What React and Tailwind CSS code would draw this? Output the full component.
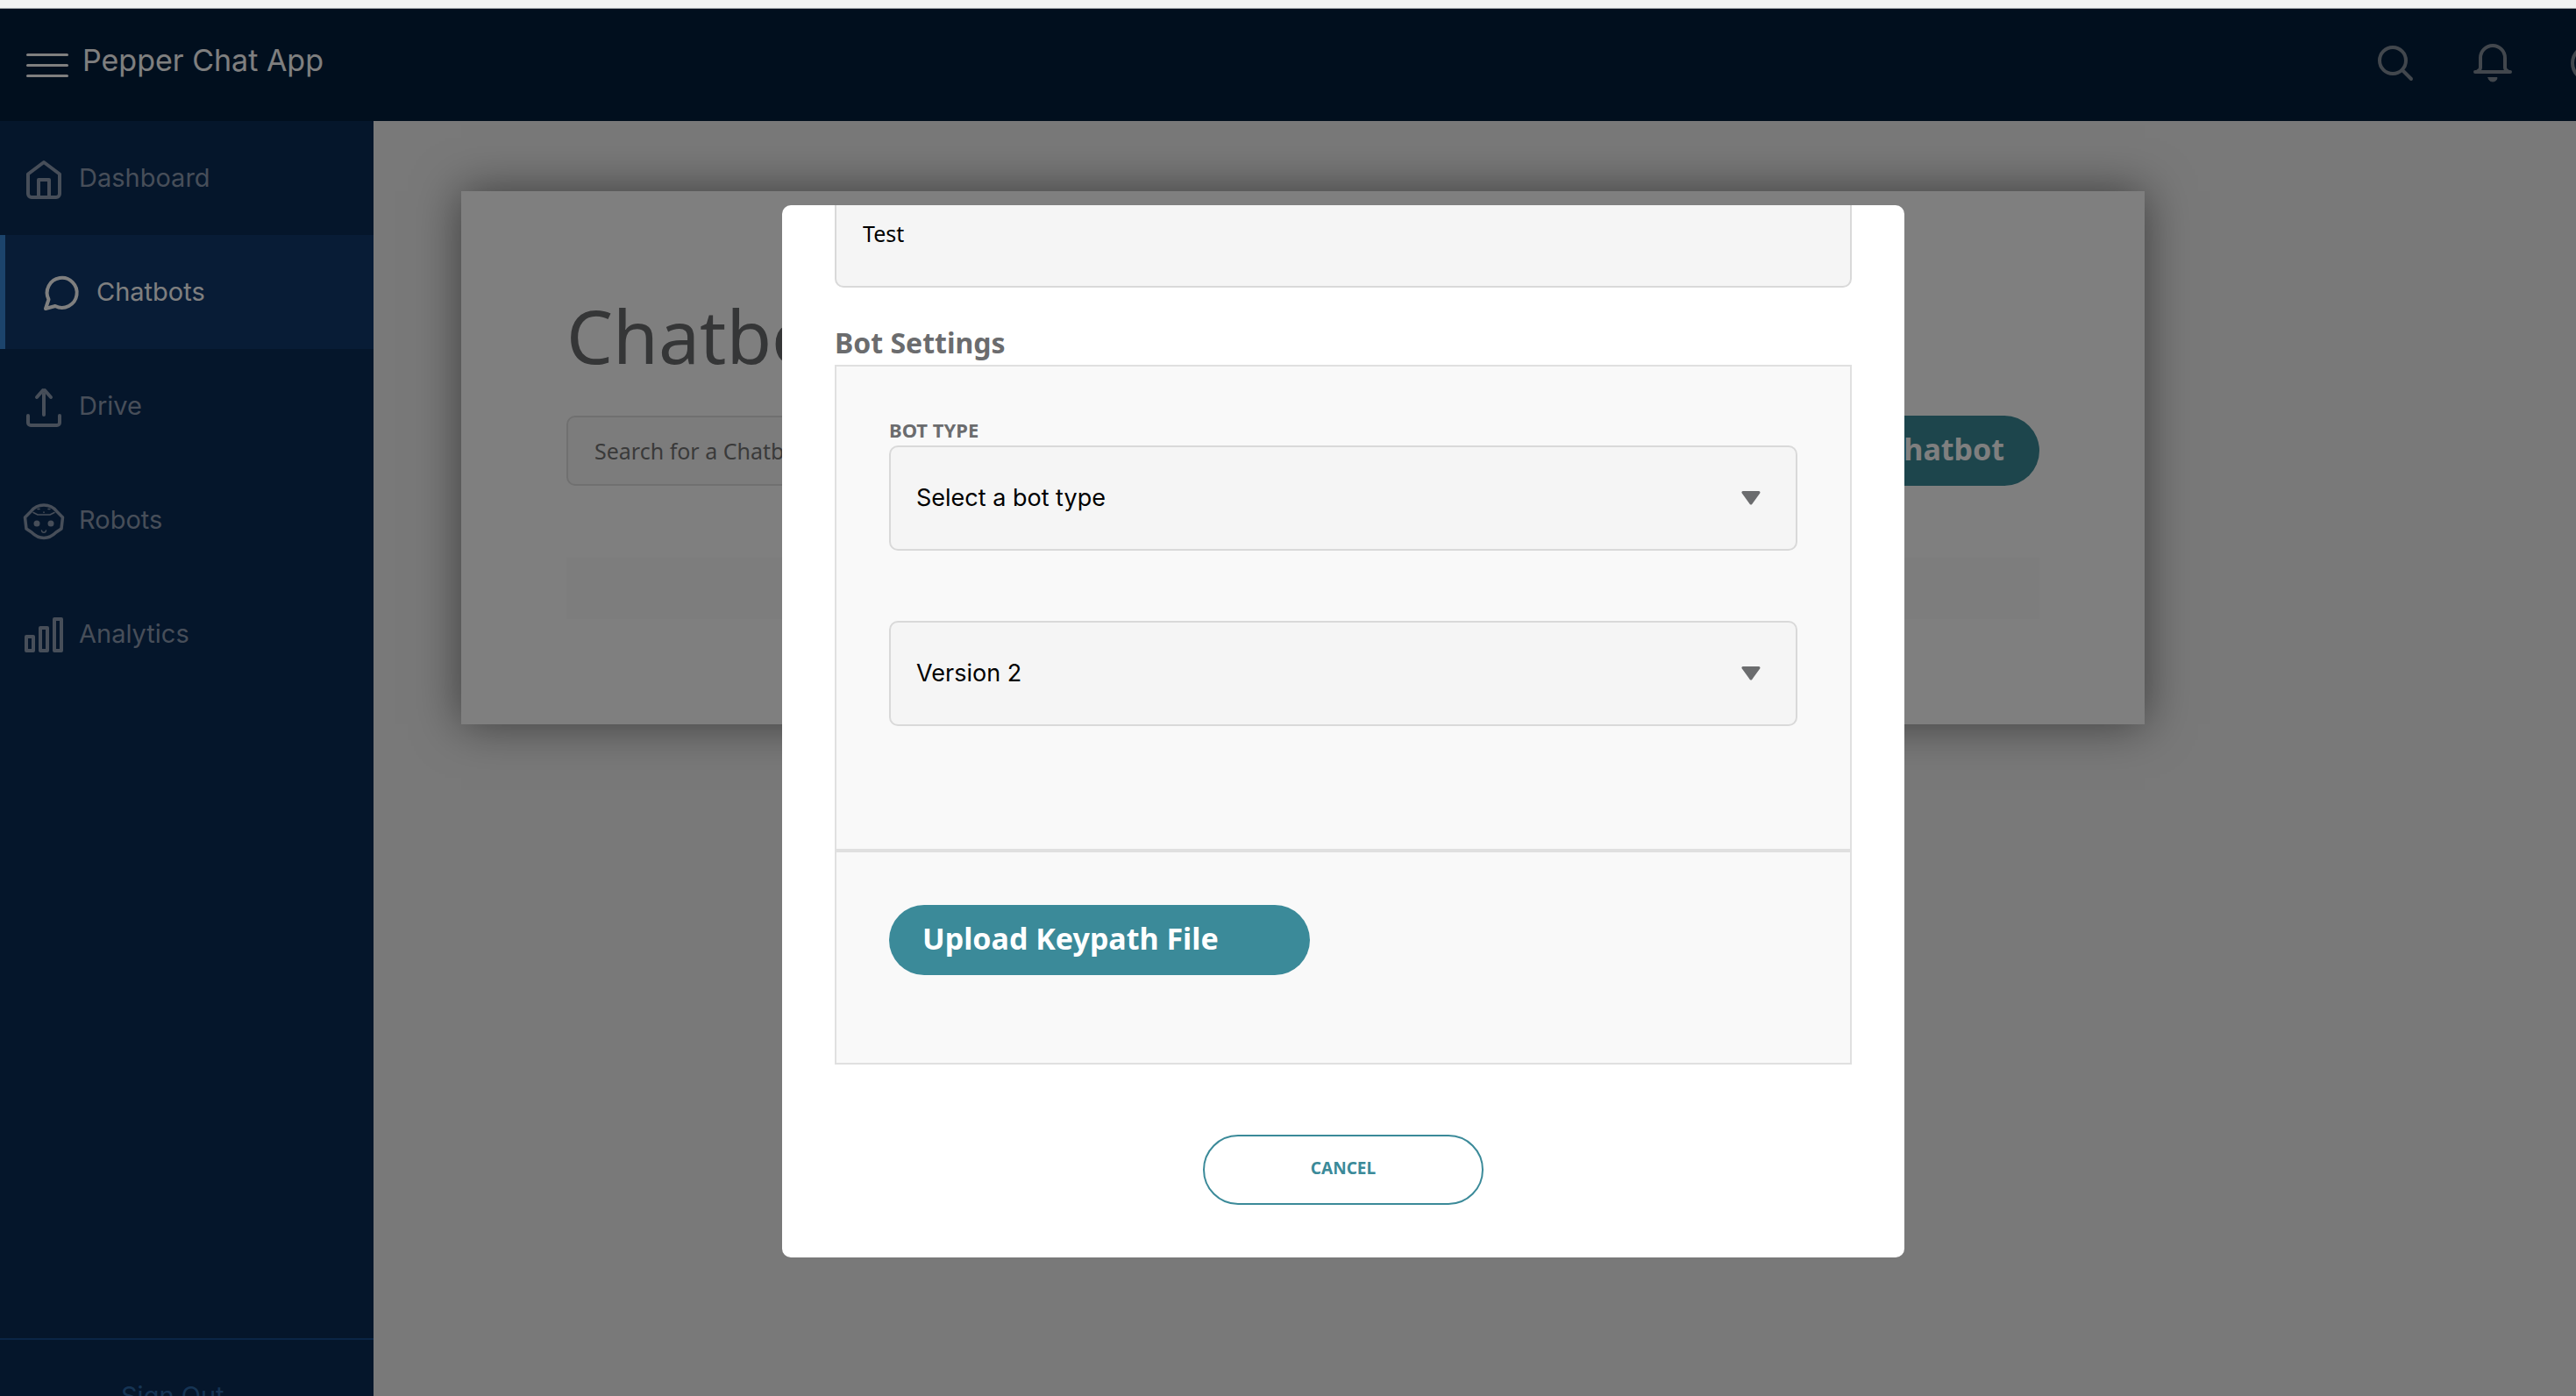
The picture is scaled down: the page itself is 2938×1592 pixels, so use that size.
const stroke = { fill: "none", stroke: "currentColor", strokeWidth: 4, strokeLinecap: "round", strokeLinejoin: "round", "aria-hidden": true };

function HomeIcon() {
  return (
    <svg className="h-12 w-12 shrink-0" viewBox="0 0 48 48" {...stroke}>
      <path d="M6 18.500 24 5l18 13.500V41a4 4 0 0 1-4 4H10a4 4 0 0 1-4-4z" />
      <path d="M18 45V25h12v20" />
    </svg>
  );
}

function ChatIcon() {
  return (
    <svg className="h-12 w-12 shrink-0" viewBox="0 0 48 48" {...stroke}>
      <path d="M6 42l3.500-10.500A17 17 0 1 1 17 39z" />
    </svg>
  );
}

function DriveIcon() {
  return (
    <svg className="h-12 w-12 shrink-0" viewBox="0 0 48 48" {...stroke}>
      <path d="M6 34v8a3 3 0 0 0 3 3h30a3 3 0 0 0 3-3v-8" />
      <path d="M24 9v24" />
      <path d="M16 13l7-8M32 13l-7-8" />
    </svg>
  );
}

function RobotIcon() {
  return (
    <svg className="h-12 w-12 shrink-0" viewBox="0 0 48 48" {...stroke}>
      <path d="M24 6c6.500 0 11 2.500 14.500 7L45.500 20 44 33l-6 4c-4 4-8.500 6.500-14 6.500S14 41 10 37l-6-4L2.500 20l7-7C13 8.500 17.500 6 24 6z" strokeWidth="3.500" />
      <path d="M12 14.500l5 2.500h14l5-2.500" strokeWidth="1.500" />
      <path d="M17 10.500h2M29 10.500h2M24 14v.5" strokeWidth="1.500" />
      <circle cx="16" cy="27" r="3.500" fill="currentColor" stroke="none" />
      <circle cx="32" cy="27" r="3.500" fill="currentColor" stroke="none" />
      <path d="M21.500 35c.5 3 4.500 3 5 0" strokeWidth="1.500" />
    </svg>
  );
}

function AnalyticsIcon() {
  return (
    <svg className="h-12 w-12 shrink-0" viewBox="0 0 48 48" {...stroke}>
      <rect x="4" y="26" width="8" height="16" />
      <rect x="20" y="16" width="8" height="26" />
      <rect x="36" y="6" width="8" height="36" />
    </svg>
  );
}

function SearchIcon() {
  return (
    <svg className="h-11 w-11" viewBox="0 0 44 44" {...stroke}>
      <circle cx="19" cy="19" r="15" />
      <path d="M30 30l10 10" />
    </svg>
  );
}

function BellIcon() {
  return (
    <svg className="h-11 w-11" viewBox="0 0 44 44" {...stroke}>
      <path d="M2 32h40M5 31c2-1 3-2 3-4V16a14 14 0 0 1 28 0v11c0 2 1 3 3 4" />
      <path d="M17 38.500h10c0 6-10 6-10 0z" fill="currentColor" strokeWidth="1" />
    </svg>
  );
}

function ProfileIcon() {
  return (
    <svg className="h-11 w-11" viewBox="0 0 44 44" {...stroke}>
      <circle cx="22" cy="22" r="20" />
      <circle cx="22" cy="17" r="7" />
      <path d="M9 36c4-9 22-9 26 0" />
    </svg>
  );
}

const links = [
  { label: "Dashboard", Icon: HomeIcon },
  { label: "Chatbots", Icon: ChatIcon, active: true },
  { label: "Drive", Icon: DriveIcon },
  { label: "Robots", Icon: RobotIcon },
  { label: "Analytics", Icon: AnalyticsIcon },
];

function Header() {
  return (
    <header className="flex h-32 shrink-0 items-center overflow-hidden bg-[#021e3c] pl-[30px] font-['Inter',sans-serif]">
      <button type="button" aria-label="Toggle menu" className="flex w-12 flex-col gap-[9px]">
        <span className="h-[3px] rounded-full bg-white" />
        <span className="h-[3px] rounded-full bg-white" />
        <span className="h-[3px] rounded-full bg-white" />
      </button>
      <span className="pb-2.5 pl-4 text-[34px] leading-10 text-white">Pepper Chat App</span>
      <div className="-mr-[38px] ml-auto flex items-center gap-[67px] pb-1 text-[#848e9a]">
        <button type="button" aria-label="Search"><SearchIcon /></button>
        <button type="button" aria-label="Notifications"><BellIcon /></button>
        <button type="button" aria-label="Profile"><ProfileIcon /></button>
      </div>
    </header>
  );
}

function Sidebar() {
  return (
    <aside className="flex w-[426px] shrink-0 flex-col bg-[#0a2c56] font-['Inter',sans-serif] text-[29px] leading-10">
      <nav className="flex flex-col">
        {links.map(({ label, Icon, active }) => (
          <a
            key={label}
            href="#"
            className={
              active
                ? "flex h-[130px] items-center gap-4 border-l-6 border-[#3888d8] bg-[#10386c] pt-0.5 pl-10 text-white"
                : "flex h-[130px] items-center gap-4 pt-0.5 pl-[26px] text-[#8e9cb2]"
            }
          >
            <Icon />
            <span className="pb-0.5">{label}</span>
          </a>
        ))}
      </nav>
      <div className="mt-auto h-[66px] overflow-hidden border-t-2 border-[#144a8c] pt-11 pl-[138px]">
        <a href="#" className="text-[#2c68a8]">Sign Out</a>
      </div>
    </aside>
  );
}

function ChatbotsCard() {
  return (
    <section className="w-[1920px] bg-white p-[120px] shadow-[0_0_50px_rgba(0,0,0,0.5)]">
      <h1 className="h-[136px] text-[84px] leading-[90px] text-[#6b6c6e]">Chatbots</h1>
      <div className="flex justify-between">
        <input
          type="text"
          aria-label="Search for a Chatbot"
          placeholder="Search for a Chatbot"
          className="h-20 w-[800px] rounded-[10px] border-2 border-[#e0e0e0] bg-[#f9f9f9] px-[30px] text-[25px] placeholder:text-[#757575]"
        />
        <button type="button" className="h-20 rounded-full bg-[#3b8a99] px-10 pb-1 text-[34px] font-bold text-white">
          Create Chatbot
        </button>
      </div>
      <div className="mt-[82px] h-[70px] bg-[#fbfbfb]" />
    </section>
  );
}

function Dropdown({ id, label, value }) {
  return (
    <div className="relative">
      <select
        id={id}
        aria-label={label}
        className="h-[120px] w-full appearance-none rounded-[10px] border-2 border-[#d9d9d9] bg-[#f5f5f5] px-[29px] font-['Inter',sans-serif] text-[27px] text-black"
      >
        <option>{value}</option>
      </select>
      <svg className="pointer-events-none absolute top-[52px] right-[42px] h-4 w-[22px]" viewBox="0 0 22 16" aria-hidden="true">
        <path d="M2 1.500h18L11 14z" fill="#6b6c6e" stroke="#6b6c6e" strokeWidth="3" strokeLinejoin="round" />
      </svg>
    </div>
  );
}

function BotModal() {
  return (
    <div className="fixed inset-x-0 top-[10px] bottom-0 flex items-start justify-center bg-black/50 pt-56 pl-[126px]">
      <div role="dialog" aria-label="Bot Settings" className="flex max-h-[1200px] w-[1280px] flex-col justify-end overflow-hidden rounded-[10px] bg-white">
        <form className="flex shrink-0 flex-col px-[60px] pb-[60px]">
          <input
            type="text"
            aria-label="Bot name"
            defaultValue="Test"
            className="h-[120px] rounded-[10px] border-2 border-[#d9d9d9] bg-[#f5f5f5] px-[30px] pb-1 text-[25px] text-black"
          />
          <h2 className="mt-10 h-12 text-[32px] leading-[46px] font-bold text-[#6b6c6e]">Bot Settings</h2>
          <div className="flex flex-col border-2 border-[#e0e0e0] bg-[#f9f9f9] px-[60px] pt-[60px] pb-[140px]">
            <label htmlFor="bot-type" className="h-[30px] text-[22px] leading-6 font-bold text-[#6b6c6e]">BOT TYPE</label>
            <Dropdown id="bot-type" value="Select a bot type" />
            <div className="mt-20">
              <Dropdown id="bot-version" label="Version" value="Version 2" />
            </div>
          </div>
          <div className="border-2 border-[#e0e0e0] bg-[#f9f9f9] px-[60px] pt-[60px] pb-[100px]">
            <button type="button" className="block h-20 w-[480px] rounded-full bg-[#3b8a99] px-[38px] pb-1 text-left text-[34px] font-bold text-white">
              Upload Keypath File
            </button>
          </div>
          <button type="button" className="mt-20 h-20 w-80 self-center rounded-full border-2 border-[#3b8a99] pb-1 text-[19px] font-bold text-[#3b8a99]">
            CANCEL
          </button>
        </form>
      </div>
    </div>
  );
}

export default function App() {
  return (
    <div className="flex h-screen flex-col overflow-hidden bg-[#f2f2f2] font-['Noto_Sans',sans-serif]">
      <div className="h-[10px] shrink-0 border-b border-[#a9adb2] bg-[#f1f1f1]" />
      <Header />
      <div className="flex min-h-0 flex-1">
        <Sidebar />
        <main className="min-w-0 flex-1 px-[100px] pt-20">
          <ChatbotsCard />
        </main>
      </div>
      <BotModal />
    </div>
  );
}
